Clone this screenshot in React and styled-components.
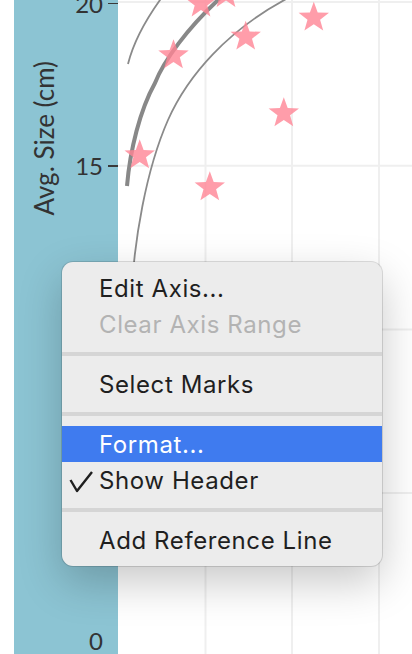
import React from 'react';
import styled, { createGlobalStyle } from 'styled-components';

const GlobalStyle = createGlobalStyle`
  html, body {
    margin: 0;
    padding: 0;
    background: #ffffff;
  }
`;

const Page = styled.div`
  position: relative;
  display: flex;
  width: 412px;
  height: 654px;
  overflow: hidden;
  background: #ffffff;
`;

const LeftGap = styled.div`
  width: 14px;
  flex-shrink: 0;
`;

const AxisPanel = styled.div`
  width: 104px;
  flex-shrink: 0;
  display: flex;
  background: #8cc4d3;
  font-family: Lato, "Liberation Sans", sans-serif;
  color: #333333;
`;

const AxisTitle = styled.div`
  align-self: flex-start;
  writing-mode: vertical-rl;
  transform: rotate(180deg);
  margin: 61px 0 0 15px;
  font-size: 26px;
  line-height: 30px;
  white-space: nowrap;
`;

const Ticks = styled.div`
  position: relative;
  flex: 1;
`;

const TickRow = styled.div`
  position: absolute;
  right: 0;
  display: flex;
  align-items: center;
  gap: 5px;
  transform: translateY(-50%);
  font-size: 24px;
  line-height: 24px;
`;

const TickMark = styled.span`
  width: 10px;
  height: 1.6px;
  background: ${p => (p.$hidden ? 'transparent' : '#3a3a3a')};
`;

const ChartArea = styled.div`
  flex: 1;
  svg {
    display: block;
  }
`;

const Menu = styled.div`
  position: absolute;
  left: 62px;
  top: 262px;
  width: 320px;
  padding: 8px 0;
  background: #ececec;
  border-radius: 11px;
  box-shadow: 0 0 0 1px rgba(0, 0, 0, 0.13), 0 16px 44px rgba(0, 0, 0, 0.22);
  font-family: Inter, "Liberation Sans", sans-serif;
  font-size: 24px;
  letter-spacing: 0.6px;
`;

const Item = styled.div`
  display: flex;
  align-items: center;
  height: 36px;
  background: ${p => (p.$active ? '#3f7bef' : 'transparent')};
  color: ${p => (p.$active ? '#ffffff' : p.$disabled ? '#b3b3b3' : '#1f1f1f')};
`;

const CheckSlot = styled.span`
  width: 37px;
  flex-shrink: 0;
  display: flex;
  align-items: center;
  padding-left: 7px;
  box-sizing: border-box;
  svg {
    margin-top: 3px;
  }
`;

const Separator = styled.div`
  height: 4px;
  margin: 10px 0;
  background: #d5d5d5;
`;

const ticks = [
  { label: '20', y: 3.5, mark: true },
  { label: '15', y: 166, mark: true },
  { label: '10', y: 328.5, mark: true },
  { label: '5', y: 491, mark: true },
  { label: '0', y: 641, mark: false },
];

const stars = [
  [139.7, 155.3], [173.5, 55.3], [201, 3.5], [226, -6],
  [245.7, 36.7], [313.8, 17.7], [283.8, 113.3], [209.8, 187.3],
];

const menuItems = [
  { label: 'Edit Axis...' },
  { label: 'Clear Axis Range', disabled: true },
  { sep: true },
  { label: 'Select Marks' },
  { sep: true },
  { label: 'Format...', active: true },
  { label: 'Show Header', checked: true },
  { sep: true },
  { label: 'Add Reference Line' },
];

const starPoints = (cx, cy, R, r) => {
  const pts = [];
  for (let i = 0; i < 10; i++) {
    const a = -Math.PI / 2 + (i * Math.PI) / 5;
    const rad = i % 2 === 0 ? R : r;
    pts.push(`${(cx + rad * Math.cos(a)).toFixed(1)},${(cy + rad * Math.sin(a)).toFixed(1)}`);
  }
  return pts.join(' ');
};

// chart origin sits at page x = 118
const Chart = () => (
  <svg width="294" height="654" viewBox="0 0 294 654">
    {[87.5, 174, 261].map(x => (
      <line key={x} x1={x} y1="0" x2={x} y2="654" stroke="#efefef" strokeWidth="2" />
    ))}
    {[2, 165.7, 329.4, 493].map(y => (
      <line key={y} x1="0" y1={y} x2="294" y2={y} stroke="#efefef" strokeWidth="2" />
    ))}
    <path d="M10,64 C14,48 22,28 42,0 L47,-8" fill="none" stroke="#8a8a8a" strokeWidth="1.8" />
    <path d="M13,300 C16,240 28,170 50,120 C70,75 110,30 170,-2" fill="none" stroke="#8a8a8a" strokeWidth="1.8" />
    <path d="M9,186 C12,150 22,110 37,83 C46,60 70,28 100,0 L110,-9" fill="none" stroke="#888888" strokeWidth="4" />
    {stars.map(([x, y], i) => (
      <polygon key={i} points={starPoints(x - 118, y, 16, 6.6)} fill="#ff8595" opacity="0.8" />
    ))}
  </svg>
);

const Check = () => (
  <svg width="24" height="22" viewBox="0 0 24 22">
    <path d="M1.5,9 L8,20 L23,1" fill="none" stroke="#1f1f1f" strokeWidth="2.4" strokeLinejoin="round" />
  </svg>
);

const App = () => (
  <Page>
    <GlobalStyle />
    <LeftGap />
    <AxisPanel>
      <AxisTitle>Avg. Size (cm)</AxisTitle>
      <Ticks>
        {ticks.map(t => (
          <TickRow key={t.label} style={{ top: t.y }}>
            <span>{t.label}</span>
            <TickMark $hidden={!t.mark} />
          </TickRow>
        ))}
      </Ticks>
    </AxisPanel>
    <ChartArea>
      <Chart />
    </ChartArea>
    <Menu>
      {menuItems.map((m, i) =>
        m.sep ? (
          <Separator key={i} />
        ) : (
          <Item key={i} $active={m.active} $disabled={m.disabled}>
            <CheckSlot>{m.checked && <Check />}</CheckSlot>
            {m.label}
          </Item>
        )
      )}
    </Menu>
  </Page>
);

export default App;
